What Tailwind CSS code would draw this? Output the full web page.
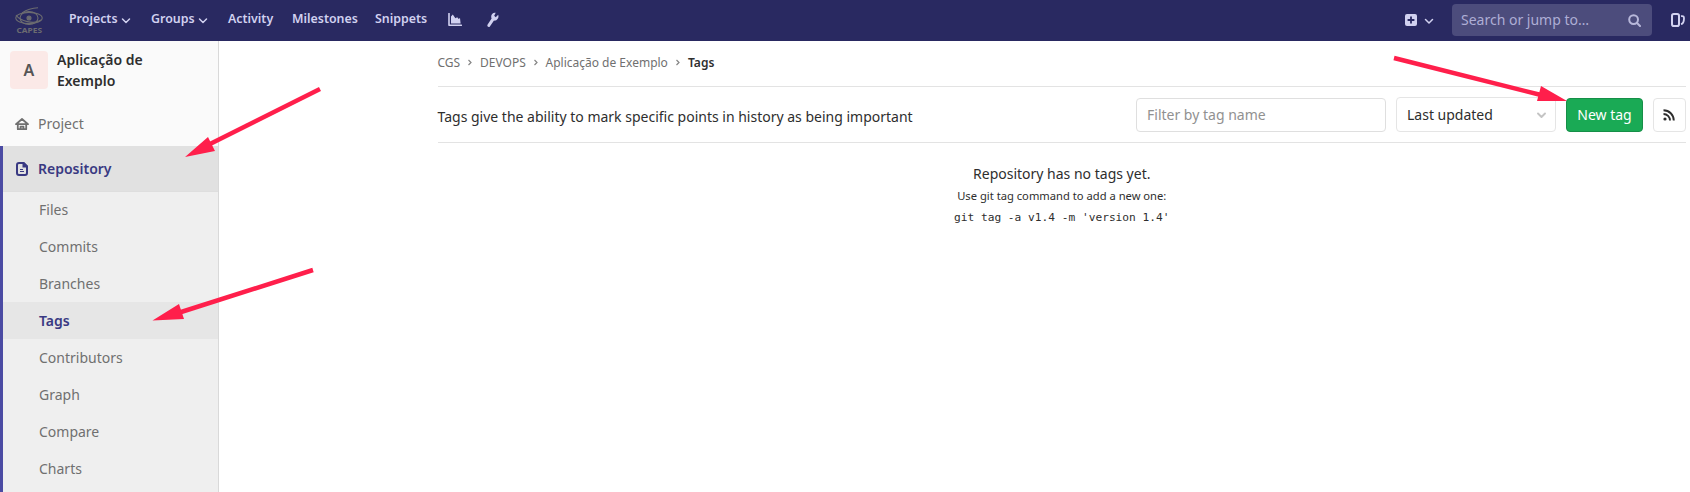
<!DOCTYPE html>
<html lang="pt-BR">
<head>
<meta charset="utf-8">
<title>Tags</title>
<script src="https://cdn.jsdelivr.net/npm/@tailwindcss/browser@4"></script>
</head>
<body class="relative h-[492px] overflow-hidden bg-white font-['Noto_Sans',sans-serif] text-sm text-[#2e2e2e]">
<header class="flex h-[41px] items-center bg-[#292961] text-[13px] font-semibold text-[#d1d1f0]">
  <svg class="ml-[14px] h-[30px] w-[30px]" viewBox="0 0 30 30" fill="none" stroke="#6c6c70" stroke-width="1.1">
    <ellipse cx="15" cy="12" rx="13.2" ry="5.6"/><ellipse cx="15" cy="12" rx="9" ry="6.500"/><path d="M2 9C6 15 20 19 27 14M8 7C13 3.500 18 2 24 1.800"/><circle cx="15" cy="12" r="2" fill="#6c6c70"/>
    <text x="2.500" y="26.500" font-size="7.5" font-weight="700" fill="#6c6c70" stroke="none" textLength="25.500" lengthAdjust="spacingAndGlyphs">CAPES</text>
  </svg>
  <nav class="ml-[25px] flex h-full items-center pb-1">
    <a class="flex w-[82px] items-center gap-[3px] text-[12.4px]">Projects<svg class="mt-1 h-[9px] w-[10px]" viewBox="0 0 10 9" fill="none" stroke="currentColor" stroke-width="1.5" stroke-linecap="round" stroke-linejoin="round"><path d="M1.500 3 5 6.500 8.500 3"/></svg></a>
    <a class="flex w-[77px] items-center gap-[3px] text-[12.4px]">Groups<svg class="mt-1 h-[9px] w-[10px]" viewBox="0 0 10 9" fill="none" stroke="currentColor" stroke-width="1.5" stroke-linecap="round" stroke-linejoin="round"><path d="M1.500 3 5 6.500 8.500 3"/></svg></a>
    <a class="w-[64px] text-[12.4px]">Activity</a>
    <a class="w-[83px] text-[12.4px]">Milestones</a>
    <a class="w-[73px] text-[12.4px]">Snippets</a>
    <svg class="mt-0.5 h-[14px] w-[14px]" viewBox="0 0 14 14"><path d="M1 .5v11.7h12.3" fill="none" stroke="currentColor" stroke-width="1.6" stroke-linecap="round" stroke-linejoin="round"/><path d="M3 10.400V3.500L4.800 1.600l2.600 3.700 1.800-1 1.500 1.800 1.300-1.200.6 5.500Z" fill="currentColor"/></svg>
    <svg class="mt-0.5 ml-[24px] h-[16px] w-[14px]" viewBox="0 0 14 16" fill="currentColor"><path d="M12.2 2.800 9.700 5.200 8.200 3.800 9.700.8C7.200.2 5 2.200 5.200 4.800c0 .8.2 1.300.4 1.800L1.500 12.800c-.8 1.400 1 3 2.200 1.900L8 8.600c2.700.4 5.400-2.400 4.200-5.800Z"/></svg>
  </nav>
  <div class="mr-[5px] ml-auto flex h-full items-center">
    <svg class="mb-px h-3 w-3" viewBox="0 0 12 12"><rect width="12" height="12" rx="2" fill="currentColor"/><path d="M6 2.600v6.800M2.600 6h6.800" stroke="#292961" stroke-width="1.8"/></svg>
    <svg class="mt-[2px] ml-[7px] h-[9px] w-[10px]" viewBox="0 0 10 9" fill="none" stroke="currentColor" stroke-width="1.5" stroke-linecap="round" stroke-linejoin="round"><path d="M1.500 2.500 5 6l3.500-3.500"/></svg>
    <div class="mr-[19px] mb-px ml-[18px] flex h-8 w-[200px] items-center justify-between rounded bg-[#4c4c7c] pr-[11px] pl-[9px] text-sm font-normal text-[#aeaed5]">Search or jump to…<svg class="h-[13px] w-[13px]" viewBox="0 0 13 13" fill="none" stroke="#b8b8da" stroke-width="2"><circle cx="5.600" cy="5.600" r="4.400"/><path d="m9 9 3 3" stroke-linecap="round"/></svg></div>
    <svg class="mb-px h-[14px] w-[14px]" viewBox="0 0 14 14" fill="none" stroke="currentColor" stroke-width="2"><rect x="1" y="1" width="7" height="12" rx="1.8"/><path d="M10 3.200c2.500-.5 3 .5 3 2 0 3-.6 5.500-3 6" stroke-width="1.8"/></svg>
  </div>
</header>

<div class="flex h-[451px]">
  <aside class="w-[219px] border-r border-[#d9d9d9] bg-[#fafafa]">
    <div class="flex h-[64px] items-start gap-[9px] pt-[8px] pl-[10px]">
      <div class="mt-[2px] flex h-[38px] w-[38px] items-center justify-center rounded bg-[#fbe9e7] text-base font-semibold text-[#555]">A</div>
      <div class="w-[110px] text-sm leading-[21px] font-semibold">Aplicação de Exemplo</div>
    </div>
    <a class="flex h-[41px] items-center gap-[9px] pb-[4px] pl-[15px] text-[#707070]"><svg class="mt-px h-[14px] w-[14px]" viewBox="0 0 14 14" fill="none" stroke="currentColor" stroke-width="1.8" stroke-linecap="round" stroke-linejoin="round"><path d="M1 7.200h12L7 2ZM2.800 7.500v4.700h8.400V7.500M5.500 12V9.700h3V12"/></svg>Project</a>
    <div class="h-[346px] border-l-[3px] border-[#4b4ba3] bg-[#efefef]">
      <a class="flex h-[45px] items-center gap-[10px] bg-[#e1e1e1] pl-[13px] font-semibold text-[#393982]"><svg class="h-[14px] w-3" viewBox="0 0 12 14" fill="none" stroke="currentColor"><path d="M3 1h4.500L11 4.500V11a2 2 0 0 1-2 2H3a2 2 0 0 1-2-2V3a2 2 0 0 1 2-2Z" stroke-width="2"/><path d="M6.500 0v5.500H12V4L8 0Z" fill="currentColor" stroke="none"/><path d="M4 7.500h3M4 9.500h4" stroke-width="1.100"/></svg>Repository</a>
      <nav class="text-[#707070]">
        <a class="flex h-[37px] items-center border-t border-[#dedede] pb-px pl-[36px]">Files</a>
        <a class="flex h-[37px] items-center pl-[36px]">Commits</a>
        <a class="flex h-[37px] items-center pl-[36px]">Branches</a>
        <a class="flex h-[37px] items-center bg-[#e6e6e6] pl-[36px] font-semibold text-[#393982]">Tags</a>
        <a class="flex h-[37px] items-center pl-[36px]">Contributors</a>
        <a class="flex h-[37px] items-center pl-[36px]">Graph</a>
        <a class="flex h-[37px] items-center pl-[36px]">Compare</a>
        <a class="flex h-[37px] items-center pl-[36px]">Charts</a>
      </nav>
    </div>
  </aside>

  <main class="mr-1 ml-[218.500px] flex-1">
    <div class="flex h-[46px] items-center border-b border-[#e3e3e3] pb-[2px] text-[12px] text-[#707070]">
      <a class="flex w-[42.500px] items-center gap-[8px]">CGS<svg class="mt-px h-[7px] w-[4px]" viewBox="0 0 4 7" fill="none" stroke="#858585" stroke-width="1.200"><path d="m.5 1 2.500 2.500L.5 6"/></svg></a>
      <a class="flex w-[65.500px] items-center gap-[8px]">DEVOPS<svg class="mt-px h-[7px] w-[4px]" viewBox="0 0 4 7" fill="none" stroke="#858585" stroke-width="1.200"><path d="m.5 1 2.500 2.500L.5 6"/></svg></a>
      <a class="flex w-[142.500px] items-center gap-[8px]">Aplicação de Exemplo<svg class="mt-px h-[7px] w-[4px]" viewBox="0 0 4 7" fill="none" stroke="#858585" stroke-width="1.200"><path d="m.5 1 2.500 2.500L.5 6"/></svg></a>
      <b class="font-semibold text-[#2e2e2e]">Tags</b>
    </div>
    <div class="flex h-[56px] items-end border-b border-[#e3e3e3] pb-[10px]">
      <div class="mr-auto flex h-[30px] items-center">Tags give the ability to mark specific points in history as being important</div>
      <div class="flex h-[34px] w-[250px] items-center rounded border border-[#dfdfdf] px-[10px] text-[#919191]">Filter by tag name</div>
      <div class="ml-[10px] flex h-[35px] w-[160px] items-center justify-between rounded border border-[#e5e5e5] pr-[9px] pl-[10px]">Last updated<svg class="mt-[2px] h-[7px] w-[9px]" viewBox="0 0 9 7" fill="none" stroke="#c4c4c4" stroke-width="1.900" stroke-linecap="round" stroke-linejoin="round"><path d="m1 1.500 3.500 3.500L8 1.500"/></svg></div>
      <div class="ml-[10px] flex h-[34px] w-[77px] items-center justify-center rounded border border-[#168f48] bg-[#1aaa55] text-white">New tag</div>
      <div class="ml-[10px] flex h-[34px] w-[33px] items-center justify-center rounded border border-[#e5e5e5]"><svg class="mr-px h-[12px] w-[12px]" viewBox="0 0 12 12" fill="none" stroke="#2e2e2e" stroke-width="1.900"><circle cx="2" cy="10" r="1.600" fill="#2e2e2e" stroke="none"/><path d="M.5 5A6.500 6.500 0 0 1 7 11.500M.5 1.200A10.300 10.300 0 0 1 10.800 11.500"/></svg></div>
    </div>
    <div class="flex flex-col items-center pt-[21px]">
      <div class="leading-[20px]">Repository has no tags yet.</div>
      <div class="mt-[2px] text-[11.200px] leading-[20px]">Use git tag command to add a new one:</div>
      <code class="mt-[2px] font-['DejaVu_Sans_Mono',monospace] text-[11.200px] leading-[20px]">git tag -a v1.4 -m 'version 1.4'</code>
    </div>
  </main>
</div>

<svg class="pointer-events-none absolute inset-0 h-[492px] w-[1690px]" viewBox="0 0 1690 492" fill="#ff1f4b" stroke="#ff1f4b">
  <path d="M320 89 208 145M313 270 178 313M1394 58 1541 95" stroke-width="4.500"/>
  <path d="m185 157 23-20 7 14ZM152.500 320.500l26.500-16.500 5 15ZM1567 101l-26-15-4 15Z" stroke="none"/>
</svg>
</body>
</html>
